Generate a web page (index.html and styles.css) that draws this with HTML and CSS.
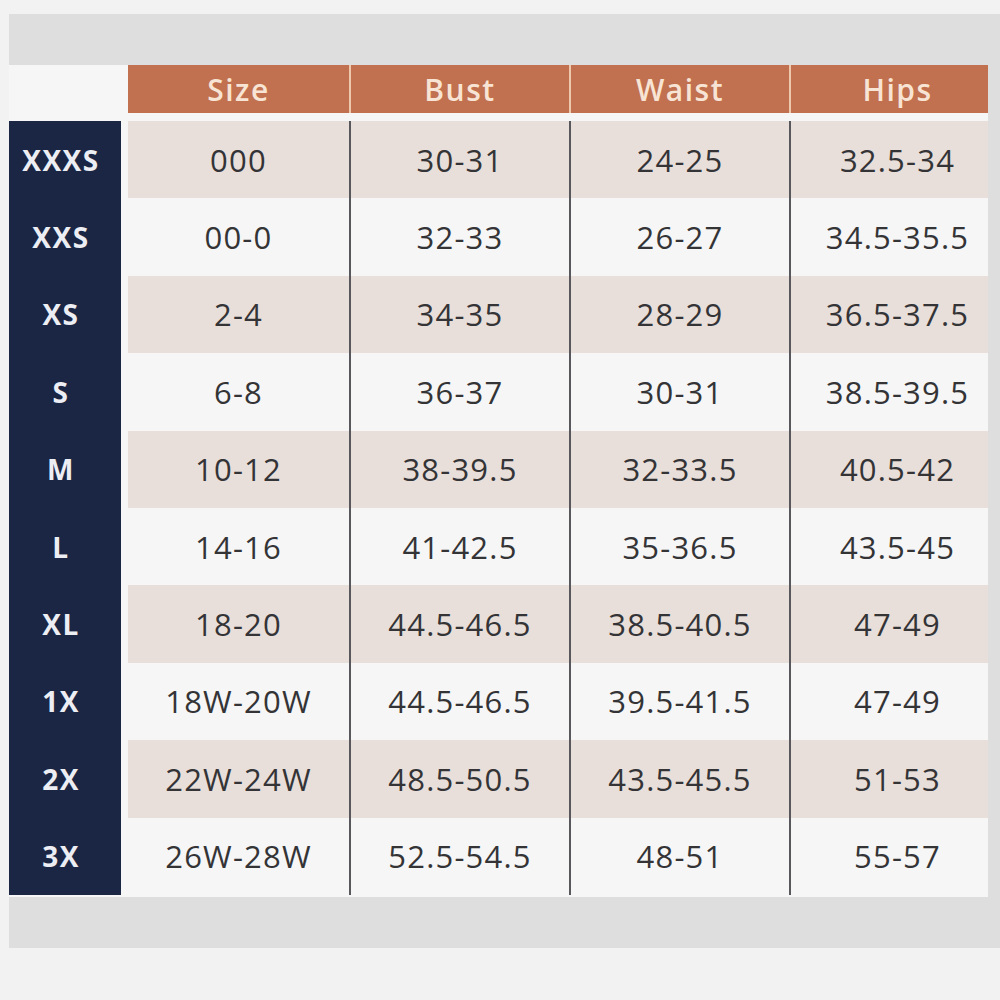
FILE: index.html
```html
<!DOCTYPE html>
<html>
<head>
<meta charset="utf-8">
<link rel="stylesheet" href="styles.css">
</head>
<body>
<div class="frame">
  <div class="chart">
    <div class="head">
      <div class="corner"></div>
      <div class="hcell">Size</div>
      <div class="hcell sep">Bust</div>
      <div class="hcell sep">Waist</div>
      <div class="hcell sep last">Hips</div>
    </div>
    <div class="body">
      <div class="row tint"><div class="label">XXXS</div><div class="cell">000</div><div class="cell sep">30-31</div><div class="cell sep">24-25</div><div class="cell sep last">32.5-34</div></div>
      <div class="row"><div class="label">XXS</div><div class="cell">00-0</div><div class="cell sep">32-33</div><div class="cell sep">26-27</div><div class="cell sep last">34.5-35.5</div></div>
      <div class="row tint"><div class="label">XS</div><div class="cell">2-4</div><div class="cell sep">34-35</div><div class="cell sep">28-29</div><div class="cell sep last">36.5-37.5</div></div>
      <div class="row"><div class="label">S</div><div class="cell">6-8</div><div class="cell sep">36-37</div><div class="cell sep">30-31</div><div class="cell sep last">38.5-39.5</div></div>
      <div class="row tint"><div class="label">M</div><div class="cell">10-12</div><div class="cell sep">38-39.5</div><div class="cell sep">32-33.5</div><div class="cell sep last">40.5-42</div></div>
      <div class="row"><div class="label">L</div><div class="cell">14-16</div><div class="cell sep">41-42.5</div><div class="cell sep">35-36.5</div><div class="cell sep last">43.5-45</div></div>
      <div class="row tint"><div class="label">XL</div><div class="cell">18-20</div><div class="cell sep">44.5-46.5</div><div class="cell sep">38.5-40.5</div><div class="cell sep last">47-49</div></div>
      <div class="row"><div class="label">1X</div><div class="cell">18W-20W</div><div class="cell sep">44.5-46.5</div><div class="cell sep">39.5-41.5</div><div class="cell sep last">47-49</div></div>
      <div class="row tint"><div class="label">2X</div><div class="cell">22W-24W</div><div class="cell sep">48.5-50.5</div><div class="cell sep">43.5-45.5</div><div class="cell sep last">51-53</div></div>
      <div class="row"><div class="label">3X</div><div class="cell">26W-28W</div><div class="cell sep">52.5-54.5</div><div class="cell sep">48-51</div><div class="cell sep last">55-57</div></div>
    </div>
  </div>
</div>
</body>
</html>
```

FILE: styles.css
```css
html, body {
  margin: 0;
  padding: 0;
  background: #f2f2f2;
}
body {
  font-family: "Open Sans", "Liberation Sans", sans-serif;
  padding-top: 14px;
  padding-left: 9px;
}
.frame {
  background: #dedede;
  padding: 51px 0 51px 0;
  height: 832px;
}
.chart {
  width: 979px;
  background: #f6f6f6;
  padding-bottom: 2px;
}
.head {
  display: flex;
  height: 48px;
  margin-bottom: 8px;
}
.corner {
  width: 119px;
  background: #f6f6f6;
}
.hcell {
  width: 221px;
  background: #c1714f;
  color: #f8e4d4;
  font-weight: 600;
  font-size: 30px;
  letter-spacing: 1.5px;
  display: flex;
  align-items: center;
  justify-content: center;
  box-sizing: border-box;
}
.hcell.sep {
  width: 220px;
  border-left: 2px solid #efc7aa;
}
.hcell.last {
  width: 199px;
  padding-left: 16px;
}
.row {
  display: flex;
  height: 77.4px;
}
.label {
  width: 112px;
  margin-right: 7px;
  padding-right: 8px;
  box-sizing: border-box;
  background: #1b2644;
  color: #eceef4;
  font-weight: 700;
  font-size: 28px;
  letter-spacing: 1.5px;
  display: flex;
  align-items: center;
  justify-content: center;
}
.cell {
  width: 221px;
  color: #343437;
  font-size: 31px;
  font-weight: 500;
  letter-spacing: 1.2px;
  display: flex;
  align-items: center;
  justify-content: center;
  box-sizing: border-box;
}
.cell.sep {
  width: 220px;
  border-left: 2px solid #58585c;
}
.cell.last {
  width: 199px;
  padding-left: 16px;
}
.row.tint .cell {
  background: #e9dfda;
}
```
